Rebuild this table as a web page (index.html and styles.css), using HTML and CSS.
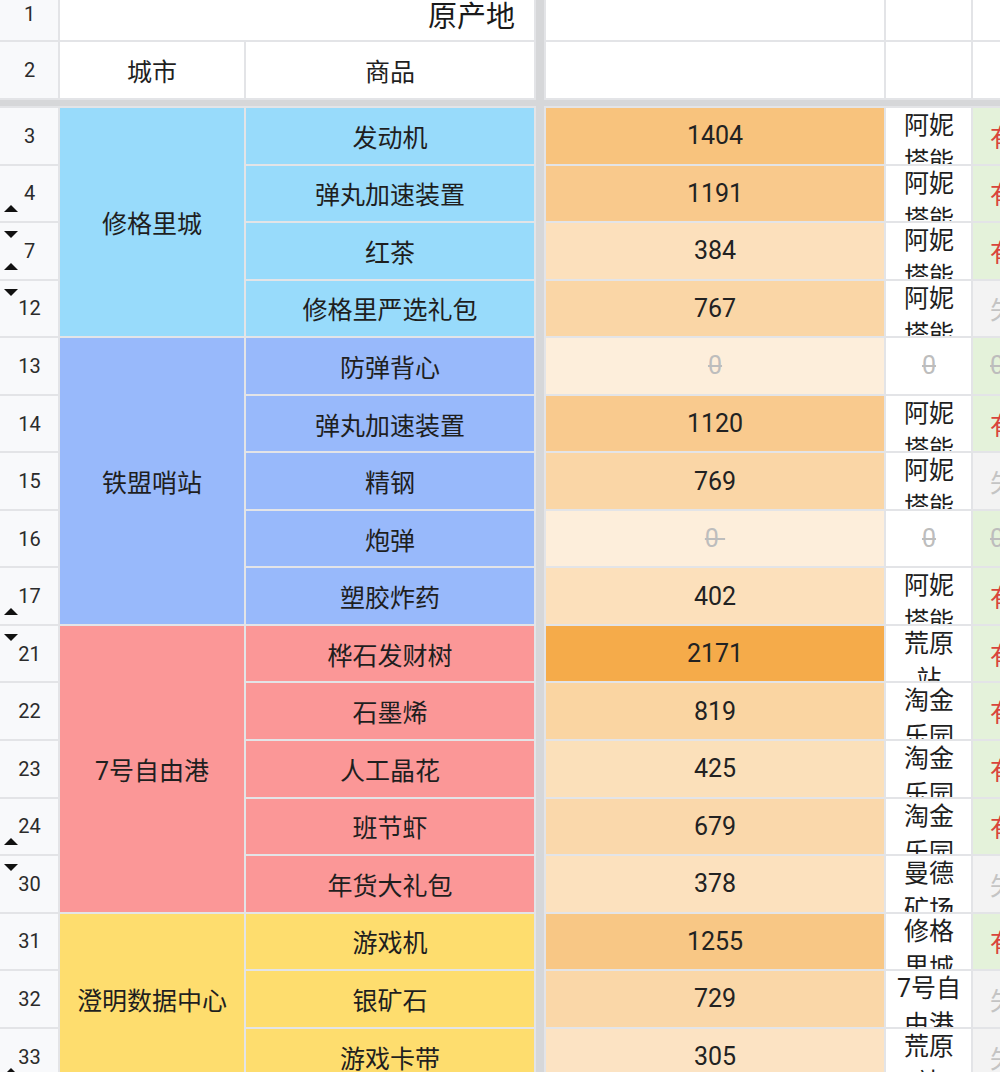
FILE: index.html
```html
<!DOCTYPE html>
<html lang="zh">
<head>
<meta charset="utf-8">
<title>原产地</title>
<link rel="stylesheet" href="styles.css">
</head>
<body>
<div class="sheet">
  <div class="split-v"></div>
  <div class="split-h"></div>

  <div class="rn rn-top">1</div>
  <div class="title">原产地</div>
  <div class="c blank"></div><div class="c blank"></div><div class="c blank"></div>

  <div class="rn">2</div>
  <div class="c head">城市</div>
  <div class="c head">商品</div>
  <div class="c blank"></div><div class="c blank"></div><div class="c blank"></div>

  <!-- 修格里城 -->
  <div class="rn">3</div>
  <div class="c city blue span4">修格里城</div>
  <div class="c item blue">发动机</div>
  <div class="c price" style="background:rgb(248,195,125)">1404</div>
  <div class="c place">阿妮塔能</div>
  <div class="c st ok">有效</div>

  <div class="rn"><span class="tri up"></span>4</div>
  <div class="c item blue">弹丸加速装置</div>
  <div class="c price" style="background:rgb(249,201,140)">1191</div>
  <div class="c place">阿妮塔能</div>
  <div class="c st ok">有效</div>

  <div class="rn"><span class="tri down"></span>7<span class="tri up"></span></div>
  <div class="c item blue">红茶</div>
  <div class="c price" style="background:rgb(252,224,188)">384</div>
  <div class="c place">阿妮塔能</div>
  <div class="c st ok">有效</div>

  <div class="rn"><span class="tri down"></span>12</div>
  <div class="c item blue">修格里严选礼包</div>
  <div class="c price" style="background:rgb(250,214,166)">767</div>
  <div class="c place">阿妮塔能</div>
  <div class="c st bad">失效</div>

  <!-- 铁盟哨站 -->
  <div class="rn">13</div>
  <div class="c city indigo span5">铁盟哨站</div>
  <div class="c item indigo">防弹背心</div>
  <div class="c price zero" style="background:rgb(253,238,219)"><s>0</s></div>
  <div class="c place zero"><s>0</s></div>
  <div class="c st ok-zero"><s>0</s></div>

  <div class="rn">14</div>
  <div class="c item indigo">弹丸加速装置</div>
  <div class="c price" style="background:rgb(249,202,142)">1120</div>
  <div class="c place">阿妮塔能</div>
  <div class="c st ok">有效</div>

  <div class="rn">15</div>
  <div class="c item indigo">精钢</div>
  <div class="c price" style="background:rgb(250,214,166)">769</div>
  <div class="c place">阿妮塔能</div>
  <div class="c st bad">失效</div>

  <div class="rn">16</div>
  <div class="c item indigo">炮弹</div>
  <div class="c price zero" style="background:rgb(253,238,219)"><s>0&nbsp;</s></div>
  <div class="c place zero"><s>0</s></div>
  <div class="c st ok-zero"><s>0</s></div>

  <div class="rn"><span class="tri up"></span>17</div>
  <div class="c item indigo">塑胶炸药</div>
  <div class="c price" style="background:rgb(252,224,187)">402</div>
  <div class="c place">阿妮塔能</div>
  <div class="c st ok">有效</div>

  <!-- 7号自由港 -->
  <div class="rn"><span class="tri down"></span>21</div>
  <div class="c city red span5">7号自由港</div>
  <div class="c item red">桦石发财树</div>
  <div class="c price" style="background:rgb(245,171,74)">2171</div>
  <div class="c place">荒原站</div>
  <div class="c st ok">有效</div>

  <div class="rn">22</div>
  <div class="c item red">石墨烯</div>
  <div class="c price" style="background:rgb(250,213,162)">819</div>
  <div class="c place">淘金乐园</div>
  <div class="c st ok">有效</div>

  <div class="rn">23</div>
  <div class="c item red">人工晶花</div>
  <div class="c price" style="background:rgb(251,224,186)">425</div>
  <div class="c place">淘金乐园</div>
  <div class="c st ok">有效</div>

  <div class="rn"><span class="tri up"></span>24</div>
  <div class="c item red">班节虾</div>
  <div class="c price" style="background:rgb(250,216,171)">679</div>
  <div class="c place">淘金乐园</div>
  <div class="c st ok">有效</div>

  <div class="rn"><span class="tri down"></span>30</div>
  <div class="c item red">年货大礼包</div>
  <div class="c price" style="background:rgb(252,225,190)">378</div>
  <div class="c place">曼德矿场</div>
  <div class="c st bad">失效</div>

  <!-- 澄明数据中心 -->
  <div class="rn">31</div>
  <div class="c city yellow span3">澄明数据中心</div>
  <div class="c item yellow">游戏机</div>
  <div class="c price" style="background:rgb(248,199,133)">1255</div>
  <div class="c place">修格里城</div>
  <div class="c st ok">有效</div>

  <div class="rn">32</div>
  <div class="c item yellow">银矿石</div>
  <div class="c price" style="background:rgb(250,215,168)">729</div>
  <div class="c place">7号自由港</div>
  <div class="c st bad">失效</div>

  <div class="rn">33<span class="tri up"></span></div>
  <div class="c item yellow">游戏卡带</div>
  <div class="c price" style="background:rgb(252,227,195)">305</div>
  <div class="c place">荒原站</div>
  <div class="c st bad">失效</div>
</div>
</body>
</html>
```

FILE: styles.css
```css
html, body {
  margin: 0;
  padding: 0;
  background: #ffffff;
}

body {
  width: 1000px;
  height: 1072px;
  overflow: hidden;
  font-family: Roboto, "Noto Sans CJK SC", sans-serif;
  color: #1f1f1f;
}

.sheet {
  display: grid;
  grid-template-columns: 58px 184px 288px 8px 338px 85px 80px;
  grid-template-rows: 40px 56px 6px repeat(17, 55.56px);
  gap: 2px;
  background: #e3e4e7;
  width: max-content;
}

.split-v {
  grid-column: 4;
  grid-row: 1 / -1;
  background: #d6d7d9;
}

.split-h {
  grid-column: 1 / -1;
  grid-row: 3;
  background: #d6d7d9;
}

.rn {
  position: relative;
  background: #f8f9fb;
  display: flex;
  align-items: center;
  justify-content: center;
  font-size: 20px;
  color: #2b2b2b;
  padding-left: 1px;
}

.rn-top {
  padding-bottom: 12px;
}

.tri {
  position: absolute;
  left: 4px;
  width: 0;
  height: 0;
  border-left: 7px solid transparent;
  border-right: 7px solid transparent;
}

.tri.up {
  bottom: 9px;
  border-bottom: 7px solid #111;
}

.tri.down {
  top: 8px;
  border-top: 7px solid #111;
}

.title {
  grid-column: span 2;
  background: #ffffff;
  display: flex;
  align-items: center;
  justify-content: flex-end;
  padding: 0 19px 12px 0;
  font-size: 29px;
  color: #1a1a1a;
}

.c {
  display: flex;
  align-items: center;
  justify-content: center;
  font-size: 25px;
  overflow: hidden;
  white-space: nowrap;
}

.blank, .head, .place {
  background: #ffffff;
}

.span3 { grid-row: span 3; }
.span4 { grid-row: span 4; }
.span5 { grid-row: span 5; }

.blue { background: #98dbfb; }
.indigo { background: #98b9fb; }
.red { background: #fb9797; }
.yellow { background: #fedd6e; }

.price {
  font-size: 25px;
  color: #222;
}

.place {
  align-items: flex-start;
  white-space: normal;
  text-align: center;
  line-height: 36px;
  padding: 0 8px 0 9px;
  word-break: break-all;
}

.st {
  justify-content: flex-start;
  padding-left: 17px;
}

.st.ok {
  background: #e4f2da;
  color: #d9443b;
}

.st.ok-zero {
  background: #e4f2da;
  color: #bdbdbd;
}

.st.bad {
  background: #f3f3f3;
  color: #c4c4c4;
}

.zero {
  color: #bdbdbd;
}

.place.zero {
  align-items: center;
}

.zero s, .ok-zero s {
  text-decoration: line-through;
  text-decoration-thickness: 2px;
}
```
